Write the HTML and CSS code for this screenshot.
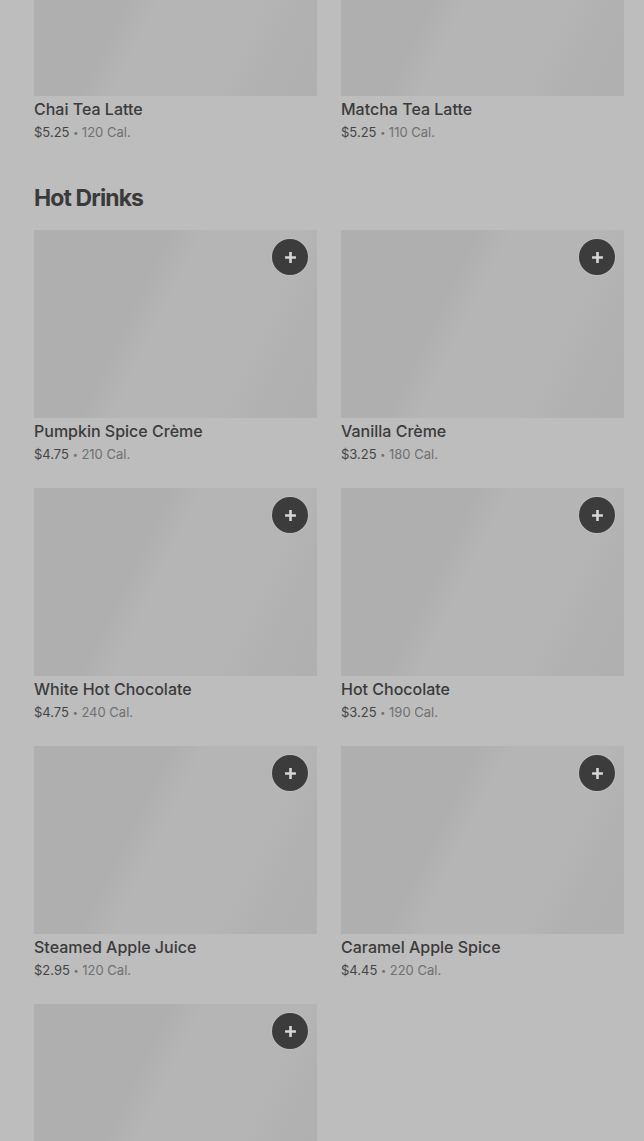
FILE: index.html
```html
<!DOCTYPE html>
<html lang="en">
    <head>
        <meta charset="UTF-8">
        <meta name="viewport" content="width=device-width, initial-scale=1.0">
        <title>Menu</title>
        <link rel="stylesheet" href="styles.css">
    </head>
    <body>
        <div class="menu">

            <section class="category">
                <div class="grid">
                    <div class="item">
                        <div class="photo"></div>
                        <p class="item-name">Chai Tea Latte</p>
                        <p class="item-meta"><span class="price">$5.25</span> <span class="dot">•</span> 120 Cal.</p>
                    </div>
                    <div class="item">
                        <div class="photo"></div>
                        <p class="item-name">Matcha Tea Latte</p>
                        <p class="item-meta"><span class="price">$5.25</span> <span class="dot">•</span> 110 Cal.</p>
                    </div>
                </div>
            </section>

            <section class="category">
                <h2 class="category-title">Hot Drinks</h2>
                <div class="grid">
                    <div class="item">
                        <div class="photo">
                            <button class="add" aria-label="Add"><svg viewBox="0 0 12 12"><path d="M6 1v10M1 6h10"/></svg></button>
                        </div>
                        <p class="item-name">Pumpkin Spice Crème</p>
                        <p class="item-meta"><span class="price">$4.75</span> <span class="dot">•</span> 210 Cal.</p>
                    </div>
                    <div class="item">
                        <div class="photo">
                            <button class="add" aria-label="Add"><svg viewBox="0 0 12 12"><path d="M6 1v10M1 6h10"/></svg></button>
                        </div>
                        <p class="item-name">Vanilla Crème</p>
                        <p class="item-meta"><span class="price">$3.25</span> <span class="dot">•</span> 180 Cal.</p>
                    </div>
                    <div class="item">
                        <div class="photo">
                            <button class="add" aria-label="Add"><svg viewBox="0 0 12 12"><path d="M6 1v10M1 6h10"/></svg></button>
                        </div>
                        <p class="item-name">White Hot Chocolate</p>
                        <p class="item-meta"><span class="price">$4.75</span> <span class="dot">•</span> 240 Cal.</p>
                    </div>
                    <div class="item">
                        <div class="photo">
                            <button class="add" aria-label="Add"><svg viewBox="0 0 12 12"><path d="M6 1v10M1 6h10"/></svg></button>
                        </div>
                        <p class="item-name">Hot Chocolate</p>
                        <p class="item-meta"><span class="price">$3.25</span> <span class="dot">•</span> 190 Cal.</p>
                    </div>
                    <div class="item">
                        <div class="photo">
                            <button class="add" aria-label="Add"><svg viewBox="0 0 12 12"><path d="M6 1v10M1 6h10"/></svg></button>
                        </div>
                        <p class="item-name">Steamed Apple Juice</p>
                        <p class="item-meta"><span class="price">$2.95</span> <span class="dot">•</span> 120 Cal.</p>
                    </div>
                    <div class="item">
                        <div class="photo">
                            <button class="add" aria-label="Add"><svg viewBox="0 0 12 12"><path d="M6 1v10M1 6h10"/></svg></button>
                        </div>
                        <p class="item-name">Caramel Apple Spice</p>
                        <p class="item-meta"><span class="price">$4.45</span> <span class="dot">•</span> 220 Cal.</p>
                    </div>
                    <div class="item">
                        <div class="photo">
                            <button class="add" aria-label="Add"><svg viewBox="0 0 12 12"><path d="M6 1v10M1 6h10"/></svg></button>
                        </div>
                    </div>
                </div>
            </section>

        </div>
    </body>
</html>
```

FILE: styles.css
```css
* {
    box-sizing: border-box;
}

html, body {
    margin: 0;
    height: 100%;
    overflow: hidden;
    background: #bdbdbd;
    font-family: Inter, 'Liberation Sans', sans-serif;
}

/* page is scrolled down a bit, first row is cut at the top */
.menu {
    margin-top: -92px;
    padding: 0 20px 0 34px;
}

.category {
    margin-bottom: 40px;
}

.category-title {
    margin: 0 0 16px 0;
    font-size: 23px;
    line-height: 32px;
    font-weight: 700;
    letter-spacing: -0.9px;
    color: #3a3a3a;
}

.grid {
    display: grid;
    grid-template-columns: 1fr 1fr;
    column-gap: 24px;
    row-gap: 24px;
}

.photo {
    position: relative;
    height: 188px;
    background: linear-gradient(116deg, #afafaf 0%, #afafaf 36%, #b5b5b5 46%, #b5b5b5 72%, #b1b1b1 84%, #b0b0b0 100%);
}

.add {
    position: absolute;
    top: 9px;
    right: 9px;
    display: flex;
    align-items: center;
    justify-content: center;
    width: 36px;
    height: 36px;
    border: none;
    border-radius: 50%;
    padding: 0;
    background: #3c3c3c;
    box-shadow: 0 0 0 1px rgba(255, 255, 255, 0.12);
}

.add svg {
    width: 13px;
    height: 13px;
    fill: none;
    stroke: #d6d6d6;
    stroke-width: 2.4;
}

.item-name {
    margin: 2px 0 0 0;
    font-size: 16px;
    line-height: 22px;
    font-weight: 500;
    color: #3b3b3b;
}

.item-meta {
    margin: 2px 0 0 0;
    height: 20px;
    font-size: 13px;
    line-height: 20px;
    color: #707070;
}

.price {
    color: #454545;
}

.dot {
    font-size: 9px;
    line-height: 1;
    vertical-align: 1px;
}
```
